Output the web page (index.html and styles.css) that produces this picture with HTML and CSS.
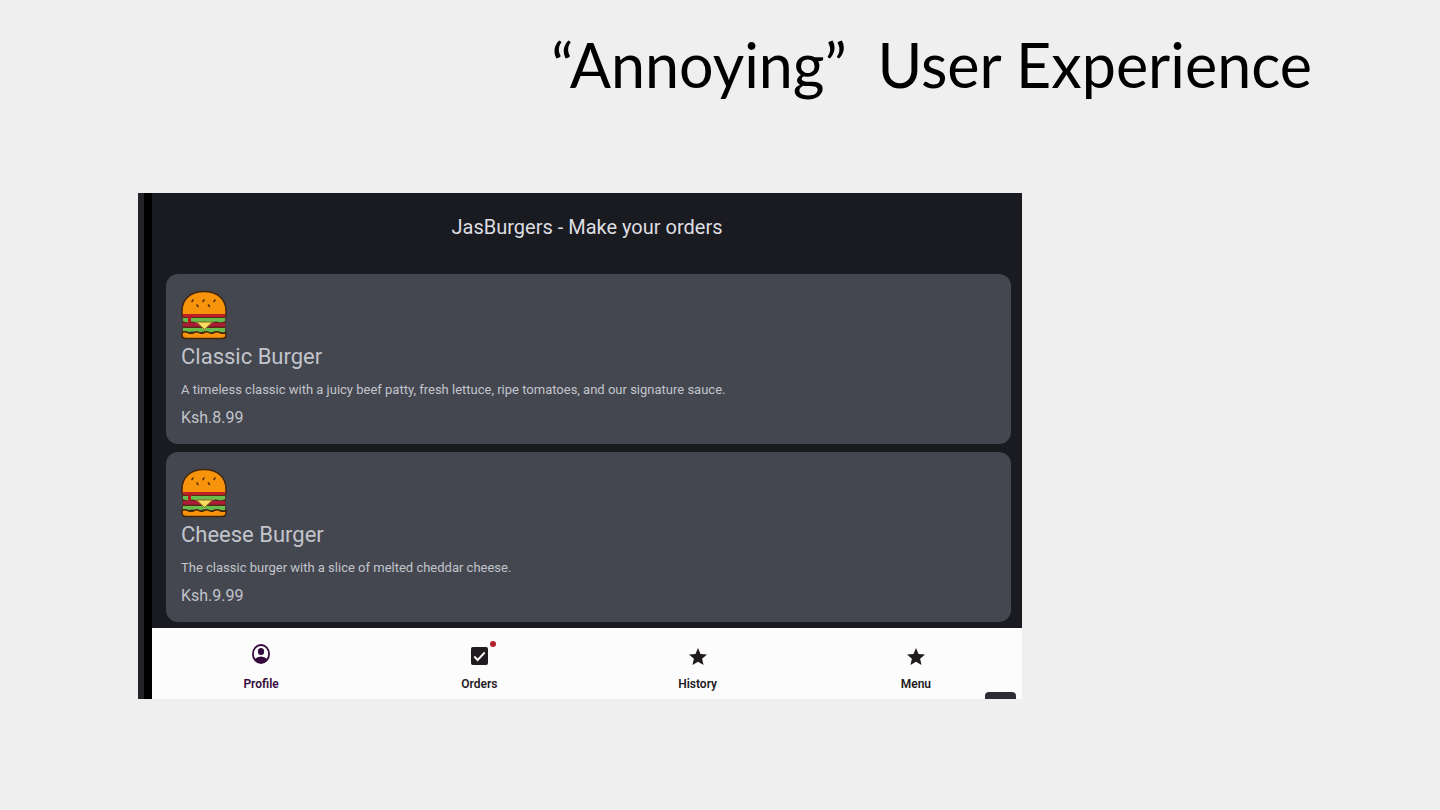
FILE: index.html
```html
<!DOCTYPE html>
<html lang="en">
<head>
  <meta charset="UTF-8">
  <meta name="viewport" content="width=device-width, initial-scale=1.0">
  <title>“Annoying” User Experience</title>
  <link rel="stylesheet" href="styles.css">
</head>
<body>
  <!-- Shared icons -->
  <svg class="sprite" aria-hidden="true">
    <symbol id="burger" viewBox="0 0 46 50">
      <rect x="1.5" y="22" width="43" height="22" fill="#5a2a16"/>
      <path d="M1 26V21C1 9 10 1.5 23 1.5S45 9 45 21V26Z" fill="#f8930c" stroke="#40260f" stroke-width="1.5"/>
      <g stroke="#5c300c" stroke-width="1.6" stroke-linecap="round">
        <path d="M11 11.500l1-1.500M22 11.500l1-1.500M33 11.500l1-1.500M16 15l1 1.500M27.500 15l1 1.500"/>
      </g>
      <rect x="2" y="24" width="42" height="3" fill="#bd2025"/>
      <path d="M2 28h42v3q-3 2-6 1t-6 0-6 0-6 0-6 0-6 0-6-1Z" fill="#68bd4c"/>
      <path d="M5 26h7l-2 2v4q-1.500 3-3 0v-4Z" fill="#b81421"/>
      <rect x="2" y="33" width="42" height="3.500" fill="#ad1c37"/>
      <path d="M2 38h42v4q-3 1-6 0t-6 0-6 0-6 0-6 0-6 0-6 0Z" fill="#68bd4c"/>
      <path d="M15.500 32h16l-8 7.500Z" fill="#f9dd61" stroke="#8c6e25"/>
      <path d="M1 42.500q3-1.500 6 0t6 0 5 0 5 0 5 0 5 0 6 0 6 0V45q0 3.500-4 3.500H5q-4 0-4-3.500Z" fill="#f8930c" stroke="#40260f" stroke-width="1.500"/>
    </symbol>
    <symbol id="star" viewBox="2 2 20 19">
      <path d="M12 17.270 18.180 21l-1.640-7.030L22 9.240l-7.190-.61L12 2 9.190 8.630 2 9.240l5.460 4.730L5.820 21Z" fill="currentColor"/>
    </symbol>
  </svg>

  <main class="slide">
    <h1>“Annoying”&nbsp; User Experience</h1>

    <div class="phone">
      <div class="screen">
        <header class="app-bar">
          <h2>JasBurgers - Make your orders</h2>
        </header>

        <section class="menu-list">
          <article class="burger-card">
            <svg class="burger-img" aria-hidden="true"><use href="#burger"/></svg>
            <h3>Classic Burger</h3>
            <p class="description">A timeless classic with a juicy beef patty, fresh lettuce, ripe tomatoes, and our signature sauce.</p>
            <p class="price">Ksh.8.99</p>
          </article>
          <article class="burger-card">
            <svg class="burger-img" aria-hidden="true"><use href="#burger"/></svg>
            <h3>Cheese Burger</h3>
            <p class="description">The classic burger with a slice of melted cheddar cheese.</p>
            <p class="price">Ksh.9.99</p>
          </article>
        </section>

        <!-- Bottom navigation -->
        <nav class="bottom-nav">
          <a href="#profile" class="active">
            <span class="nav-icon">
              <svg class="icon-profile" viewBox="0 0 20 20" preserveAspectRatio="none">
                <circle cx="10" cy="10" r="9" fill="none" stroke="currentColor" stroke-width="2"/>
                <circle cx="10" cy="7.500" r="3.500" fill="currentColor"/>
                <path d="M3 15q3-2.500 7-2.500t7 2.500q-3 4-7 4t-7-4Z" fill="currentColor"/>
              </svg>
            </span>
            Profile
          </a>
          <a href="#orders">
            <span class="nav-icon">
              <svg class="icon-orders" viewBox="0 0 18 18" preserveAspectRatio="none">
                <rect width="18" height="18" rx="2" fill="currentColor"/>
                <path d="M3.500 9.500 7 13l7.500-7.500" fill="none" stroke="#fdfcfd" stroke-width="2"/>
              </svg>
              <span class="badge"></span>
            </span>
            Orders
          </a>
          <a href="#history">
            <span class="nav-icon"><svg class="icon-star"><use href="#star"/></svg></span>
            History
          </a>
          <a href="#menu">
            <span class="nav-icon"><svg class="icon-star"><use href="#star"/></svg></span>
            Menu
          </a>
        </nav>
        <span class="corner-tab"></span>
      </div>
    </div>
  </main>
</body>
</html>
```

FILE: styles.css
```css
* {
  box-sizing: border-box;
  margin: 0;
  padding: 0;
}

body {
  background-color: #efefef;
  color: #000;
  font-family: Roboto, "Liberation Sans", sans-serif;
}

.sprite {
  display: none;
}

svg {
  display: block;
}

.slide {
  padding: 29px 128px 32px 138px;
}

h1 {
  margin-bottom: 92px;
  font-family: Lato, sans-serif;
  font-size: 61px;
  font-weight: 400;
  line-height: 72px;
  text-align: right;
}

/* Device frame around the app */
.phone {
  margin-right: 290px;
  padding-left: 8px;
  background-color: #000;
  border-left: 6px solid #212326;
}

.screen {
  position: relative;
  overflow: hidden;
  background-color: #1a1b20;
}

.app-bar {
  padding: 20px 0 33px;
  text-align: center;
}

.app-bar h2 {
  color: #dedee2;
  font-size: 20px;
  font-weight: 400;
  line-height: 28px;
}

.menu-list {
  display: flex;
  flex-direction: column;
  gap: 8px;
  padding: 0 11px 6px 14px;
}

.burger-card {
  padding: 16px 15px 14px;
  background-color: #44474f;
  border-radius: 12px;
  color: #c2c4cc;
}

.burger-img {
  width: 46px;
  height: 50px;
}

.burger-card h3 {
  font-size: 22px;
  font-weight: 400;
  line-height: 34px;
}

.description {
  font-size: 13px;
  line-height: 32px;
}

.price {
  font-size: 16px;
  line-height: 24px;
}

/* Bottom navigation, runs slightly past the screen edge */
.bottom-nav {
  display: grid;
  grid-template-columns: repeat(4, 1fr);
  margin-right: -3px;
  background-color: #fdfcfd;
}

.bottom-nav a {
  display: flex;
  flex-direction: column;
  align-items: center;
  padding: 16px 0 7px;
  color: #1f1b1e;
  font-size: 12px;
  font-weight: 600;
  line-height: 16px;
  text-decoration: none;
}

.bottom-nav .active {
  color: #350a3c;
}

.nav-icon {
  display: flex;
  position: relative;
  align-items: center;
  height: 24px;
  margin-bottom: 8px;
}

.bottom-nav .active .nav-icon {
  align-items: flex-start;
}

.icon-profile {
  width: 18px;
  height: 20px;
}

.icon-orders {
  width: 17px;
  height: 18px;
}

.icon-star {
  width: 18px;
  height: 19px;
}

.badge {
  position: absolute;
  top: -3px;
  right: -8px;
  width: 6px;
  height: 6px;
  background-color: #b3202a;
  border-radius: 50%;
}

.corner-tab {
  position: absolute;
  right: 6px;
  bottom: 0;
  width: 31px;
  height: 7px;
  background-color: #2c2d33;
  border-radius: 4px 4px 0 0;
}
```
